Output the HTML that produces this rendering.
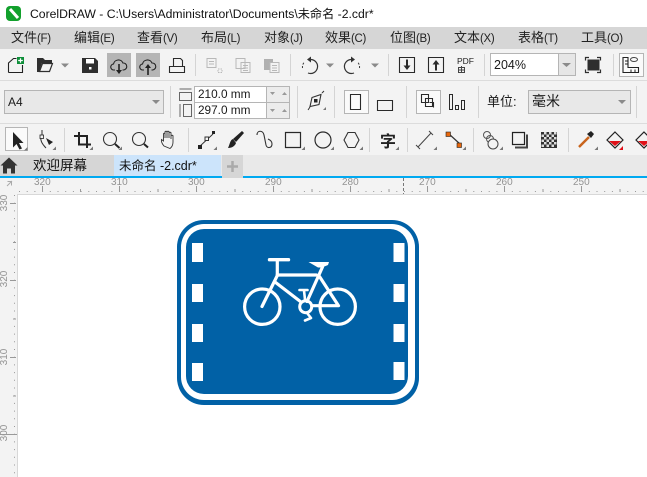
<!DOCTYPE html>
<html><head><meta charset="utf-8">
<style>
html,body{margin:0;padding:0;background:#fff}
#p{position:relative;width:647px;height:477px;overflow:hidden;background:#fff;font-family:"Liberation Sans","Noto Sans CJK SC",sans-serif;color:#1a1a1a}
#p div{position:absolute;white-space:nowrap}
.m{top:27px;height:22px;line-height:21px;font-size:13px;color:#222}
.m span{font-size:11.5px;letter-spacing:-.3px}
.r{font-size:10px;color:#939393;line-height:12px}
.rv{font-size:10px;color:#939393;line-height:12px;transform:rotate(-90deg);transform-origin:center;width:20px;text-align:center}
svg{position:absolute;left:0;top:0}
</style></head><body><div id="p">
<div style="left:0;top:27px;width:647px;height:22px;background:#d6d6d6"></div>
<div style="left:0;top:49px;width:647px;height:106px;background:#f3f3f3"></div>
<div style="left:0;top:80px;width:647px;height:1px;background:#dcdcdc"></div>
<div style="left:0;top:123px;width:647px;height:1px;background:#dcdcdc"></div>
<div style="left:0;top:155px;width:647px;height:21px;background:#e9e9e9"></div>
<div style="left:0;top:155px;width:114px;height:21px;background:#d6d6d6"></div>
<div style="left:114px;top:155px;width:107px;height:21px;background:#cce4fb"></div>
<div style="left:0;top:176px;width:647px;height:1.500px;background:#00a9f1"></div>
<div style="left:222px;top:155px;width:21px;height:22.500px;background:#d6d6d6"></div>
<div style="left:0;top:177.500px;width:647px;height:300px;background:#f3f3f3"></div>
<div style="left:18px;top:195px;width:629px;height:282px;background:#fff"></div>
<div style="left:17px;top:194px;width:1px;height:283px;background:#d8d8d8"></div>
<div style="left:17px;top:194px;width:630px;height:1px;background:#d8d8d8"></div>

<div style="left:30px;top:6px;font-size:12.200px;line-height:16px;color:#111">CorelDRAW - C:\Users\Administrator\Documents\未命名 -2.cdr*</div>

<div class="m" style="left:11px">文件<span>(F)</span></div>
<div class="m" style="left:74px">编辑<span>(E)</span></div>
<div class="m" style="left:137px">查看<span>(V)</span></div>
<div class="m" style="left:201px">布局<span>(L)</span></div>
<div class="m" style="left:264px">对象<span>(J)</span></div>
<div class="m" style="left:325px">效果<span>(C)</span></div>
<div class="m" style="left:390px">位图<span>(B)</span></div>
<div class="m" style="left:454px">文本<span>(X)</span></div>
<div class="m" style="left:518px">表格<span>(T)</span></div>
<div class="m" style="left:581px">工具<span>(O)</span></div>

<!-- boxes -->
<div style="left:107px;top:53px;width:24px;height:24px;background:#b5b5b5"></div>
<div style="left:136px;top:53px;width:24px;height:24px;background:#b5b5b5"></div>
<div style="left:490px;top:53px;width:84px;height:21px;background:#fff;border:1px solid #b5b5b5"></div>
<div style="left:558px;top:54px;width:16px;height:21px;background:#e6e6e6;border-left:1px solid #b5b5b5"></div>
<div style="left:494px;top:56px;font-size:12.500px;line-height:18px">204%</div>
<div style="left:619px;top:53px;width:23px;height:22px;background:#fafafa;border:1px solid #b5b5b5"></div>

<div style="left:4px;top:90px;width:158px;height:22px;background:#e8e8e8;border:1px solid #b5b5b5"></div>
<div style="left:8px;top:94px;font-size:12px;line-height:16px">A4</div>
<div style="left:194px;top:86px;width:71px;height:31px;background:#fff;border:1px solid #b5b5b5"></div>
<div style="left:266px;top:86px;width:24px;height:33px;background:#ececec;border:1px solid #b5b5b5;box-sizing:border-box"></div>
<div style="left:195px;top:102px;width:95px;height:1px;background:#b5b5b5"></div>
<div style="left:198px;top:87px;font-size:11.800px;line-height:15px">210.0 mm</div>
<div style="left:198px;top:103px;font-size:11.800px;line-height:15px">297.0 mm</div>

<div style="left:344px;top:90px;width:23px;height:22px;background:#fafafa;border:1px solid #b5b5b5"></div>
<div style="left:416px;top:90px;width:23px;height:22px;background:#fafafa;border:1px solid #b5b5b5"></div>
<div style="left:487px;top:93px;font-size:13px;line-height:18px">单位:</div>
<div style="left:528px;top:90px;width:101px;height:22px;background:#e8e8e8;border:1px solid #b5b5b5"></div>
<div style="left:532px;top:92px;font-size:14px;line-height:19px">毫米</div>
<div style="left:5px;top:127px;width:21px;height:22px;background:#fafafa;border:1px solid #b5b5b5"></div>

<div style="left:33px;top:157px;font-size:13.500px;line-height:18px;color:#111">欢迎屏幕</div>
<div style="left:119px;top:157px;font-size:12.500px;line-height:18px;color:#111">未命名 -2.cdr*</div>

<div class="r" style="left:34px;top:177px">320</div>
<div class="r" style="left:111px;top:177px">310</div>
<div class="r" style="left:188px;top:177px">300</div>
<div class="r" style="left:265px;top:177px">290</div>
<div class="r" style="left:342px;top:177px">280</div>
<div class="r" style="left:419px;top:177px">270</div>
<div class="r" style="left:496px;top:177px">260</div>
<div class="r" style="left:573px;top:177px">250</div>
<div class="rv" style="left:-5px;top:197px">330</div>
<div class="rv" style="left:-5px;top:273px">320</div>
<div class="rv" style="left:-5px;top:351px">310</div>
<div class="rv" style="left:-5px;top:427px">300</div>

<svg width="647" height="477" viewBox="0 0 647 477" fill="none">
<!-- logo -->
<rect x="6" y="6" width="15" height="15" rx="4" fill="#12a02c"/>
<path d="M10 9l8 9" stroke="#fff" stroke-width="3"/>

<!-- separators -->
<path d="M195.500 54v22M290.500 54v22M388.500 54v22M484.500 54v22M613.500 54v22M170.500 86v32M297.500 86v32M334.500 86v32M406.500 86v32M478.500 86v32M636.500 86v32M64.500 128v24M188.500 128v24M369.500 128v24M407.500 128v24M473.500 128v24M568.500 128v24" stroke="#d4d4d4"/>

<!-- new -->
<path d="M8.500 72.500V63l5-4.500h3M8.500 72.500h14V65" stroke="#222" stroke-width="1.100"/>
<rect x="17" y="57" width="7" height="7" fill="#0f8f3a"/><path d="M20.500 58.200v4.600M18.200 60.500h4.600" stroke="#fff" stroke-width="1.200"/>
<!-- open -->
<path d="M37 72V58h6l2 2h7v3H42l-3 9z" fill="#2f2f2f"/><path d="M39.500 71.500l3-8h10l-3 8z" stroke="#2f2f2f" stroke-width="1.200"/>
<path d="M61 63.500h8l-4 4z" fill="#8a8a8a"/>
<!-- save -->
<path d="M82 58h13l3 3v12H82z" fill="#2f2f2f"/><rect x="86" y="59" width="8" height="4.500" fill="#fff"/><rect x="89" y="67" width="2.500" height="2.500" fill="#fff"/>
<!-- cloud down / up -->
<path d="M115 70h-1a3 3 0 0 1-.5-6a5 5 0 0 1 9.500-1a3.500 3.500 0 0 1 .5 7h-1" stroke="#222" stroke-width="1.100"/>
<path d="M119 64v7" stroke="#222" stroke-width="1.600"/><path d="M116 70h6l-3 4z" fill="#222"/>
<path d="M144 70h-1a3 3 0 0 1-.5-6a5 5 0 0 1 9.500-1a3.500 3.500 0 0 1 .5 7h-1" stroke="#222" stroke-width="1.100"/>
<path d="M148 67v8" stroke="#222" stroke-width="1.600"/><path d="M145 68h6l-3-4z" fill="#222"/>
<!-- print -->
<path d="M173.500 66.500v-8h7l2 2v6M169.500 66.500h15v6h-15z" stroke="#2a2a2a" stroke-width="1.100"/>
<!-- disabled -->
<g stroke="#b8b8b8" stroke-width="1">
<path d="M207 58.500h9v9h-9zM209 61.500h5M209 64h5"/><path d="M218 69h4v3.500h-4z" stroke-dasharray="1.500 1"/>
<path d="M236 58.500h9v10h-9zM241 62.500h9v10h-9zM243 65.500h5M243 68h5M243 70.500h5"/>
</g>
<path d="M264 59h9v11h-9z" fill="#b0b0b0"/><path d="M270 62.500h9v10h-9z" fill="#f3f3f3" stroke="#b8b8b8"/><path d="M272 65.500h5M272 68h5M272 70.500h5" stroke="#b8b8b8"/>
<!-- undo redo -->
<path d="M311 59.500a7 7 0 1 1-3 13.500" stroke="#333" stroke-width="1.200"/><path d="M302.500 68a7 7 0 0 1 2-6" stroke="#333" stroke-dasharray="2 1.500"/><path d="M311 56.500v6l-4-3z" fill="#333"/>
<path d="M326 63.500h8l-4 4z" fill="#8a8a8a"/>
<path d="M351 59.500a7 7 0 1 0 3 13.500" stroke="#333" stroke-width="1.200"/><path d="M359.500 68a7 7 0 0 0-2-6" stroke="#333" stroke-dasharray="2 1.500"/><path d="M351 56.500v6l4-3z" fill="#333"/>
<path d="M371 63.500h8l-4 4z" fill="#8a8a8a"/>
<!-- import export -->
<path d="M399.500 57.500h15v15h-15zM428.500 57.500h15v15h-15z" stroke="#2a2a2a" stroke-width="1.100"/>
<path d="M407 59.500v8" stroke="#2a2a2a" stroke-width="2"/><path d="M403.500 65.500h7l-3.500 4.500z" fill="#2a2a2a"/>
<path d="M436 62.500v8" stroke="#2a2a2a" stroke-width="2"/><path d="M432.500 64.500h7l-3.500-4.500z" fill="#2a2a2a"/>
<text x="457" y="64" font-size="8.500" fill="#222" font-family="Liberation Sans">PDF</text>
<path d="M458.500 67.500h6v5h-6zM461.500 66v6.500M458.500 70h6" stroke="#444"/>
<path d="M562 63h9l-4.500 4z" fill="#8a8a8a"/>
<!-- full page -->
<rect x="587.500" y="59.500" width="12" height="11" fill="#2f2f2f"/>
<path d="M585.500 60.500v-3h3.500M597 57.500h3.500v3M585.500 69.500v3h3.500M597 72.500h3.500v-3" stroke="#2f2f2f" stroke-width="1.200"/>
<!-- rulers icon -->
<path d="M623 57.500v15h15.500v-5h-10.500v-10z" stroke="#222" stroke-width="1.100"/><ellipse cx="634" cy="59.500" rx="3.500" ry="2" stroke="#444"/>
<path d="M625 61h3M625 64h3M631 69.500v3M635 69.500v3" stroke="#222"/>

<!-- A4 arrow -->
<path d="M152 100h8l-4 4z" fill="#8a8a8a"/>
<path d="M618 100h8l-4 4z" fill="#8a8a8a"/>
<!-- size icons -->
<path d="M179.500 92.500h12v8h-12zM179.500 89h12M191.500 104.500h-8v12h8zM180 104v13" stroke="#666"/>
<path d="M270 92h5l-2.500 3zM270 109h5l-2.500 3z" fill="#999"/>
<path d="M282 95h5l-2.500-3zM282 112h5l-2.500-3z" fill="#999"/>
<!-- page offset icon -->
<path d="M312 97.500l9-3-2 10-9 2z" stroke="#333" stroke-width="1.100"/><rect x="314" y="99" width="3.500" height="3.500" fill="#222"/><path d="M310 107l-2 3M322 93l2-2" stroke="#333"/>
<path d="M326 110h-3l3-3z" fill="#777"/>
<!-- portrait landscape -->
<path d="M350.500 94.500h10v15h-10zM377.500 100.500h15v10h-15z" stroke="#2a2a2a" stroke-width="1.100"/>
<!-- overlap -->
<path d="M421.500 94.500h7v8h-7zM425.500 98.500h7v8h-7zM429.500 102.500h4v5" stroke="#2a2a2a" stroke-width="1.100"/>
<path d="M449.500 94.500h3v15h-3zM455.500 105.500h3v4h-3zM461.500 100.500h3v9h-3z" stroke="#2a2a2a" stroke-width="1"/>

<!-- tool row -->
<path d="M13 132v15.500l3.500-3.500 3 5.500 2.500-1-3-5.500h4.500z" fill="#222"/>
<path d="M27.500 150.500H24l3.500-3.500z" fill="#777"/>
<!-- shape -->
<path d="M42 130v5M41 137c-1 4 2 8 5 11" stroke="#333"/><rect x="40" y="135" width="3.500" height="3.500" fill="#f3f3f3" stroke="#222" stroke-width=".8"/><path d="M46 138l7 4-4 3z" fill="#222"/>
<path d="M56 150h-3.500l3.500-3.500z" fill="#777"/>
<!-- crop -->
<path d="M74 136H87V148M79 132V144.500H91" stroke="#222" stroke-width="2"/><path d="M93 150h-3.500l3.500-3.500z" fill="#777"/>
<!-- zoom -->
<circle cx="110" cy="139" r="6.500" stroke="#333" stroke-width="1.100"/><path d="M115 144l4.500 4" stroke="#222" stroke-width="2"/><path d="M122 150h-3.500l3.500-3.500z" fill="#777"/>
<circle cx="139" cy="139" r="6.500" stroke="#333" stroke-width="1.100"/><path d="M144 144l4 3.500" stroke="#222" stroke-width="2"/>
<!-- hand -->
<path d="M164 146c-2-2-3-5-2.500-6.500l2 1.500v-7c0-1 1.500-1 1.500 0v4-6c0-1 2-1 2 0v6-6c0-1 2-1 2 0v6-5c0-1 2-1 2 0v6-3c0-1 2-1 2 0v6c0 3-1 5-3 6.500z" stroke="#333" stroke-width=".9"/>
<!-- freehand -->
<path d="M199 147l14-13" stroke="#333"/><rect x="198" y="145" width="4" height="4" fill="#222"/><rect x="205" y="137" width="3.500" height="3.500" fill="#f3f3f3" stroke="#333"/><rect x="212" y="131" width="3" height="3" fill="#222"/>
<path d="M217 150h-3.500l3.500-3.500z" fill="#777"/>
<!-- brush -->
<path d="M242 131l2 2-8 9-3-3z" fill="#222"/><path d="M233 139c-3 1-3 5-5 9 4 0 7-2 8-5z" fill="#222"/>
<!-- curve -->
<path d="M257 135c0-5 6-5 7 0l2 10c1 4 6 3 6-1 0-3-2-4-4-5" stroke="#333" stroke-width="1.100"/>
<path d="M285.500 132.500h15v15h-15z" stroke="#2a2a2a" stroke-width="1.200"/><path d="M305 150h-3.500l3.500-3.500z" fill="#777"/>
<circle cx="323" cy="140" r="8" stroke="#2a2a2a" stroke-width="1.200"/><path d="M334 150h-3.500l3.500-3.500z" fill="#777"/>
<path d="M348 132.500h7l4 7.500-4 7.500h-7l-4-7.500z" stroke="#333" stroke-width="1.100"/><path d="M363 150h-3.500l3.500-3.500z" fill="#777"/>
<text x="380" y="147" font-size="16" font-weight="bold" fill="#222" font-family="Noto Sans CJK SC,sans-serif">字</text>
<path d="M399 150h-3.500l3.500-3.500z" fill="#777"/>
<path d="M418 147l13-14M416 145l4 4M429 131l4 4" stroke="#444"/><path d="M437 150h-3.500l3.500-3.500z" fill="#777"/>
<path d="M449 134l11 10" stroke="#333" stroke-width="1.200"/><rect x="446" y="132" width="4.500" height="4.500" fill="#e8670c" stroke="#222" stroke-width=".6"/><rect x="457" y="143" width="4.500" height="4.500" fill="#e8670c" stroke="#222" stroke-width=".6"/>
<path d="M466 150h-3.500l3.500-3.500z" fill="#777"/>
<circle cx="487" cy="135" r="3.500" stroke="#555"/><circle cx="490" cy="139" r="3.500" stroke="#555"/><circle cx="493" cy="144" r="5" stroke="#444" fill="#f3f3f3"/>
<path d="M503 150h-3.500l3.500-3.500z" fill="#777"/>
<path d="M512.500 132.500h12v12h-12z" stroke="#222" stroke-width="1.200"/><path d="M527 134.500v13h-12" stroke="#444" stroke-width="2"/>
<rect x="541" y="132" width="16" height="16" fill="#333"/>
<path d="M544 132h2.500v2.500H544zM549 132h2.500v2.500H549zM554 132h2.500v2.500H554zM541.500 134.500H544V137h-2.500zM546.500 134.500H549V137h-2.500zM551.500 134.500H554V137h-2.500zM544 137h2.500v2.500H544zM549 137h2.500v2.500H549zM554 137h2.500v2.500H554zM541.500 139.500H544V142h-2.500zM546.500 139.500H549V142h-2.500zM551.500 139.500H554V142h-2.500zM544 142h2.500v2.500H544zM549 142h2.500v2.500H549zM554 142h2.500v2.500H554zM541.500 144.500H544V147h-2.500zM546.500 144.500H549V147h-2.500zM551.500 144.500H554V147h-2.500z" fill="#ddd"/>
<path d="M579 147l10-10" stroke="#c8641c" stroke-width="2.500"/><path d="M587 134l4-3 3 3-3 4z" fill="#222"/><path d="M598 150h-3.500l3.500-3.500z" fill="#777"/>
<path d="M615 132l8 8-8 8-8-8z" stroke="#222" stroke-width="1.200"/><path d="M609 141h12l-6 5z" fill="#e01018"/><path d="M623 150h-4l4-4z" fill="#e01018"/>
<path d="M644 132l8 8-8 8-8-8z" stroke="#222" stroke-width="1.200"/><path d="M638 141h12l-6 5z" fill="#e01018"/>

<!-- home -->
<path d="M9 157.500l8.500 8H15v8h-4v-5H7v5H3v-8H.5z" fill="#333"/>
<path d="M232.500 161v11M227 166.500h11" stroke="#aaa" stroke-width="2.500"/>

<!-- rulers ticks -->
<path d="M42.500 186v6M119.500 186v6M196.500 186v6M273.500 186v6M350.500 186v6M427.500 186v6M504.500 186v6M581.500 186v6M10 203.500h6M10 280.500h6M10 357.500h6M0 434.500h17" stroke="#999"/>
<path d="M80.500 189v3M158 189v3M235 189v3M312 189v3M389 189v3M466 189v3M543 189v3M620 189v3M13 242.500h3M13 319h3M13 396h3" stroke="#999"/>
<path d="M19 191.500H647" stroke="#999" stroke-dasharray="1 6.700"/>
<path d="M14.500 195V477" stroke="#999" stroke-dasharray="1 6.700"/>
<path d="M403.500 178v16" stroke="#777" stroke-dasharray="3 2"/>
<path d="M7 186l5-5M7.500 181.500h4v4" stroke="#aaa"/>

<!-- sign -->
<rect x="177" y="220" width="242" height="185" rx="27" fill="#0161a6"/>
<rect x="181" y="224" width="234" height="176" rx="23" fill="#fff"/>
<rect x="186" y="229" width="222" height="165" rx="18" fill="#0161a6"/>
<g fill="#fff">
<rect x="192" y="243" width="11" height="19"/><rect x="192" y="284" width="11" height="18"/><rect x="192" y="324" width="11" height="18"/><rect x="192" y="363" width="11" height="18"/>
<rect x="393.500" y="243" width="11" height="19"/><rect x="393.500" y="284" width="11" height="18"/><rect x="393.500" y="324" width="11" height="18"/><rect x="393.500" y="362" width="11" height="18"/>
</g>
<g stroke="#fff" stroke-width="3.200" stroke-linecap="round" stroke-linejoin="round">
<circle cx="262.300" cy="306.700" r="17.700"/>
<circle cx="337.700" cy="306.700" r="17.700"/>
<circle cx="305.700" cy="306.700" r="6" stroke-width="3"/>
<path d="M269.500 259.700h19" stroke-width="3.400"/>
<path d="M277.300 260v15.500L262 306.500"/>
<path d="M277.300 275h39"/>
<path d="M275 282L301 302"/>
<path d="M322.500 267L307 301.500"/>
<path d="M319.500 276.500L338.500 305.700H312"/>
<path d="M299.500 290h8M304 290.500l1 9" stroke-width="2.600"/>
<path d="M307 313l4 5-6 2.500" stroke-width="2.600"/>
</g>
<path d="M308.500 262H329l-1 3-6 2.500h-4z" fill="#fff"/>
</svg>
</div></body></html>
